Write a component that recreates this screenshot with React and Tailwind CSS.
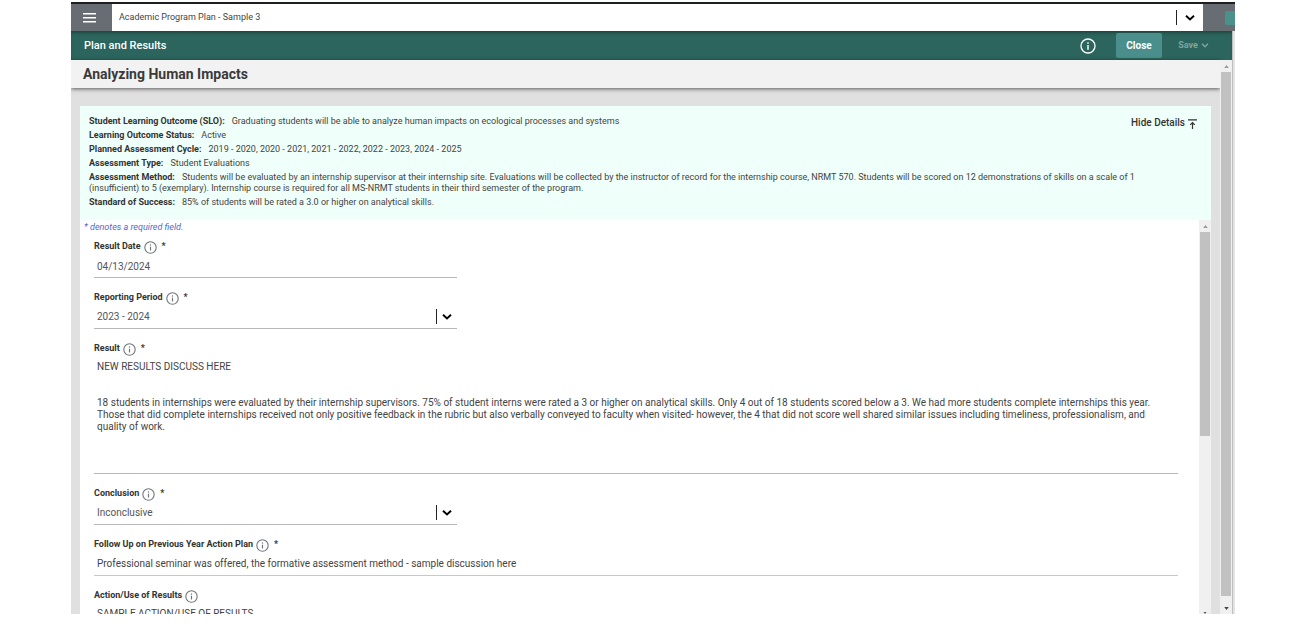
import React from 'react';

const details = [
  ['Student Learning Outcome (SLO):', 'Graduating students will be able to analyze human impacts on ecological processes and systems'],
  ['Learning Outcome Status:', 'Active'],
  ['Planned Assessment Cycle:', '2019 - 2020, 2020 - 2021, 2021 - 2022, 2022 - 2023, 2024 - 2025'],
  ['Assessment Type:', 'Student Evaluations'],
  ['Assessment Method:', 'Students will be evaluated by an internship supervisor at their internship site. Evaluations will be collected by the instructor of record for the internship course, NRMT 570. Students will be scored on 12 demonstrations of skills on a scale of 1 (insufficient) to 5 (exemplary). Internship course is required for all MS-NRMT students in their third semester of the program.'],
  ['Standard of Success:', '85% of students will be rated a 3.0 or higher on analytical skills.'],
];

const resultText = `NEW RESULTS DISCUSS HERE


18 students in internships were evaluated by their internship supervisors. 75% of student interns were rated a 3 or higher on analytical skills. Only 4 out of 18 students scored below a 3. We had more students complete internships this year. Those that did complete internships received not only positive feedback in the rubric but also verbally conveyed to faculty when visited- however, the 4 that did not score well shared similar issues including timeliness, professionalism, and quality of work.`;

function InfoIcon({ className }) {
  return (
    <svg viewBox="0 0 24 24" className={className} fill="none" stroke="currentColor" strokeWidth="2" aria-hidden="true">
      <circle cx="12" cy="12" r="10.5" />
      <path d="M12 10.5v7" strokeWidth="2.2" />
      <path d="M12 6.2v2.4" strokeWidth="2.2" />
    </svg>
  );
}

function Chevron() {
  return (
    <svg viewBox="0 0 10 6" className="h-[6px] w-[10px]" fill="none" stroke="#000" strokeWidth="2" aria-hidden="true">
      <path d="M1 .8L5 4.400 9 .8" />
    </svg>
  );
}

function Field({ id, label, required, children }) {
  return (
    <div className="flex flex-col">
      <div className="flex h-4 items-center pt-[2px] text-[9px] font-bold text-[#333]">
        <label htmlFor={id}>{label}</label>
        <button type="button" aria-label={`About ${label}`} className="ml-[3px] text-[#70757a]">
          <InfoIcon className="size-[13px]" />
        </button>
        {required && <span className="ml-[5px]">*</span>}
      </div>
      {children}
    </div>
  );
}

function SelectField({ id, label, value }) {
  return (
    <Field id={id} label={label} required>
      <div className="grid h-6 w-[363px] max-w-full items-center border-b border-[#b8b8b8]">
        <select id={id} defaultValue={value} className="h-full w-full appearance-none bg-transparent px-[3px] text-[10px] text-[#555] outline-none [grid-area:1/1]">
          <option>{value}</option>
        </select>
        <span className="pointer-events-none flex items-center gap-[5px] justify-self-end pr-[5px] [grid-area:1/1]">
          <span className="h-[15px] w-px bg-[#222]" />
          <Chevron />
        </span>
      </div>
    </Field>
  );
}

function Arrow({ down, className }) {
  return (
    <svg viewBox="0 0 6 4" className={className} fill="currentColor" aria-hidden="true">
      <path d={down ? 'M0 0h6L3 4z' : 'M0 4h6L3 0z'} />
    </svg>
  );
}

export default function App() {
  return (
    <div className="h-screen overflow-hidden bg-white pt-[2px] pr-[65px] pb-4 pl-[71px] font-[Roboto,sans-serif]">
      <div className="flex h-full flex-col overflow-hidden">
        <header className="flex h-[29px] shrink-0 border-t-2 border-[#1d1f21] bg-white">
          <button type="button" aria-label="Menu" className="flex w-[41px] items-center justify-center bg-[#686d73] pr-1">
            <svg viewBox="0 0 13 10" className="h-[10px] w-[13px]" fill="#fff" aria-hidden="true">
              <path d="M0 0h13v1.600H0zM0 4h13v1.600H0zM0 8h13v1.600H0z" />
            </svg>
          </button>
          <div className="grid flex-1 items-center">
            <select aria-label="Program" className="h-full w-full appearance-none bg-white px-[7px] text-[9px] text-[#444] outline-none [grid-area:1/1]">
              <option>Academic Program Plan - Sample 3</option>
            </select>
            <span className="pointer-events-none flex items-center gap-[8px] justify-self-end pr-[8px] [grid-area:1/1]">
              <span className="h-[15px] w-px bg-[#222]" />
              <Chevron />
            </span>
          </div>
          <div className="flex w-8 items-center justify-end bg-[#686d73]">
            <span className="h-[14px] w-[10px] rounded-l-[2px] bg-[#4a918c]" />
          </div>
        </header>

        <div className="flex min-h-0 flex-1 bg-[#e4e4e4]">
          <div className="flex min-w-0 flex-1 flex-col">
            <div className="flex h-[29px] shrink-0 items-center bg-[#2b655d] pr-[18px] pl-[13px] shadow-[inset_0_3px_3px_-1px_rgba(0,0,0,0.3)]">
              <h1 className="flex-1 pt-px text-[11px] font-medium text-white">Plan and Results</h1>
              <button type="button" aria-label="Information" className="mr-5 text-white">
                <InfoIcon className="size-4" />
              </button>
              <button type="button" className="h-[25px] w-[46px] rounded-[2px] bg-[#4a8f8b] text-[10px] font-bold text-white">Close</button>
              <button type="button" className="ml-[11px] flex h-[25px] w-[41px] items-center justify-center gap-[3px] text-[9px] font-bold text-[#7fa59f]">
                Save
                <svg viewBox="0 0 8 5" className="h-[5px] w-[8px]" fill="none" stroke="currentColor" strokeWidth="1.300" aria-hidden="true">
                  <path d="M1 .8l3 3 3-3" />
                </svg>
              </button>
            </div>

            <div className="flex min-h-0 flex-1 bg-[#e0e0e0]">
              <div className="flex min-w-0 flex-1 flex-col">
                <div className="flex h-[28px] shrink-0 items-center bg-[#f2f2f2] px-3 shadow-[0_1px_4px_rgba(0,0,0,0.6)]">
                  <h2 className="pt-px text-[14px] font-bold text-[#3a3a3a]">Analyzing Human Impacts</h2>
                </div>
                <main className="mt-[18px] mr-[9px] ml-[9px] flex min-h-0 flex-1 flex-col bg-white">
                  <section className="flex h-[114px] shrink-0 items-start bg-[#effffa] px-[9px] pt-[9px]">
                    <dl className="flex min-w-0 flex-1 flex-col gap-[3px] pt-px text-[9px] leading-[11px] text-[#444]">
                      {details.map(([term, text]) => (
                        <div key={term} className="pr-4">
                          <dt className="mr-[7px] inline font-bold text-[#333]">{term}</dt>
                          <dd className="inline">{text}</dd>
                        </div>
                      ))}
                    </dl>
                    <button type="button" className="-ml-20 flex w-20 items-center justify-end gap-[3px] pr-[5px] text-[10px] font-medium text-[#333]">
                      Hide Details
                      <svg viewBox="0 0 9 10" className="mt-[2px] h-[10px] w-[9px]" fill="none" stroke="currentColor" strokeWidth="1.200" aria-hidden="true">
                        <path d="M0 .8h9M4.500 10V4M2.200 5.800l2.300-2.300 2.300 2.300" />
                      </svg>
                    </button>
                  </section>

                  <div className="flex min-h-0 flex-1">
                    <form className="min-w-0 flex-1 overflow-hidden pr-[21px] pl-[14px]">
                      <p className="-ml-[10px] mb-1 text-[9px] leading-[14px] text-[#4f6bd0] italic">* denotes a required field.</p>
                      <div className="flex flex-col gap-[11px]">
                        <Field id="result-date" label="Result Date" required>
                          <input id="result-date" defaultValue="04/13/2024" className="h-6 w-[363px] max-w-full border-b border-[#b8b8b8] px-[3px] pt-px text-[10px] text-[#555] outline-none" />
                        </Field>
                        <SelectField id="period" label="Reporting Period" value="2023 - 2024" />
                        <Field id="result" label="Result" required>
                          <textarea id="result" defaultValue={resultText} className="h-[118px] w-full resize-none overflow-hidden border-b border-[#b8b8b8] px-[3px] pt-[5px] text-[10px] leading-[12px] text-[#444] outline-none" />
                        </Field>
                        <SelectField id="conclusion" label="Conclusion" value="Inconclusive" />
                        <Field id="follow-up" label="Follow Up on Previous Year Action Plan" required>
                          <input id="follow-up" defaultValue="Professional seminar was offered, the formative assessment method - sample discussion here" className="h-6 w-full border-b border-[#c8c8c8] px-[3px] text-[10px] text-[#444] outline-none" />
                        </Field>
                        <Field id="action" label="Action/Use of Results">
                          <textarea id="action" defaultValue="SAMPLE ACTION/USE OF RESULTS" className="h-[118px] w-full resize-none overflow-hidden border-b border-[#b8b8b8] px-[3px] pt-[5px] text-[10px] leading-[12px] text-[#444] outline-none" />
                        </Field>
                      </div>
                    </form>
                    <div className="flex w-3 flex-col items-center overflow-hidden bg-[#f0f0f0]">
                      <span className="flex h-3 shrink-0 items-center"><Arrow className="h-[3px] w-[5px] text-[#999]" /></span>
                      <span className="h-[204px] w-[10px] shrink-0 bg-[#c1c1c1]" />
                      <span className="flex flex-1 items-end"><Arrow down className="h-[2px] w-[6px] text-[#555]" /></span>
                    </div>
                  </div>
                </main>
              </div>
              <div className="flex w-3 flex-col items-center bg-[#f0f0f0]">
                <span className="flex h-3 shrink-0 items-center"><Arrow className="h-[3px] w-[5px] text-[#999]" /></span>
                <span className="w-[10px] flex-1 bg-[#c1c1c1]" />
                <span className="flex h-[18px] shrink-0 items-center pt-[6px]"><Arrow down className="h-[3px] w-[5px] text-[#444]" /></span>
              </div>
            </div>
          </div>
          <div className="w-[3px] border-l border-[#bdbdbd] bg-[#e4e4e4]" />
        </div>
      </div>
    </div>
  );
}
